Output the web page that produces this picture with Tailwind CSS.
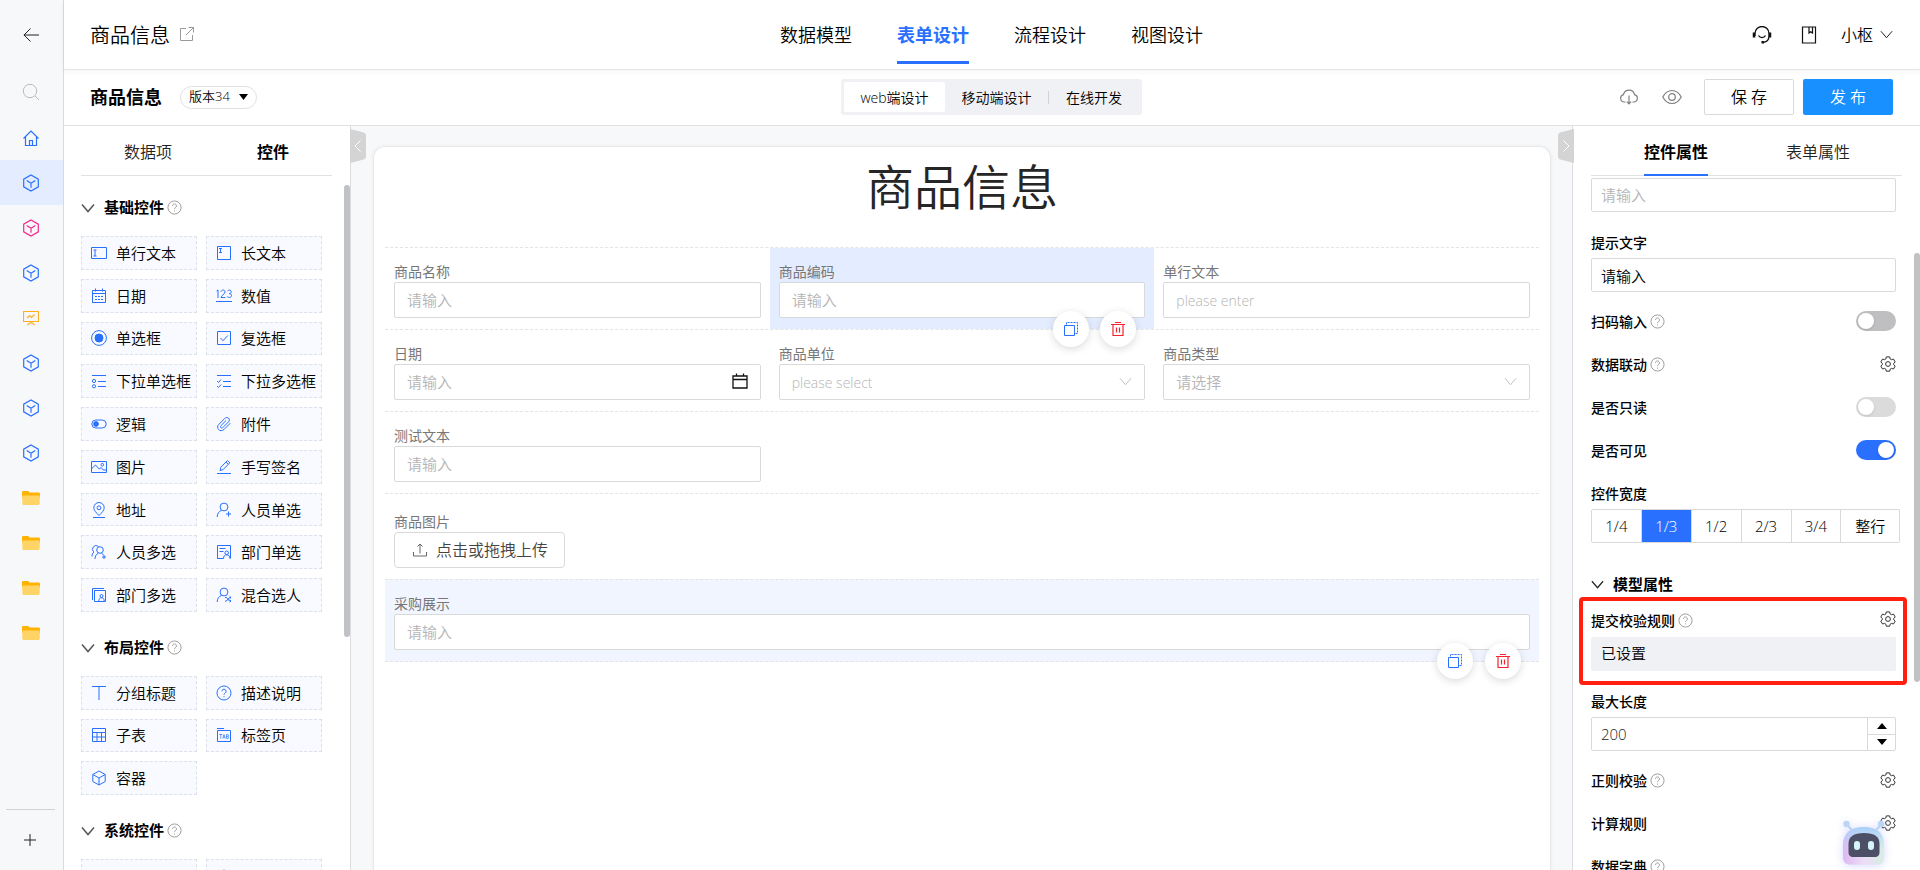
<!doctype html>
<html lang="zh-CN">
  <head>
    <meta charset="UTF-8">
    <meta name="viewport" content="width=device-width, initial-scale=1">
    <title>商品信息 - 表单设计</title>
    <script src="https://cdn.jsdelivr.net/npm/@tailwindcss/browser@4"></script>
  </head>
  <body class="h-screen overflow-hidden bg-white font-['Open_Sans','Noto_Sans_CJK_SC',sans-serif] font-[350] text-[15px] text-black">

    <!-- icon sprite -->
    <svg class="hidden" xmlns="http://www.w3.org/2000/svg">
      <symbol id="i-cube" viewBox="0 0 18 18"><path stroke-width="1.200" d="M9 1l7.300 4.200v7.600L9 17l-7.300-4.200V5.200zM4.700 6.600L9 9.200l4.300-2.600M9 9.200v4.600" /></symbol>
      <symbol id="i-folder" viewBox="0 0 18 16"><path fill="#ffb300" stroke="none" d="M0 2.200C0 1.500.5 1 1.200 1h4.600c.5 0 .8.200 1.100.6L7.600 2.500h9c.8 0 1.400.6 1.400 1.400V8H0z"/><path fill="#ffd466" stroke="none" d="M.3 5.500h17.400V13.500c0 .8-.6 1.500-1.400 1.500H1.700C.9 15 .3 14.300.3 13.500z"/></symbol>
      <symbol id="i-help" viewBox="0 0 16 16"><circle cx="8" cy="8" r="7"/><path d="M5.900 6.300a2.100 2.100 0 1 1 3.200 1.800c-.7.4-1.100.8-1.100 1.600M8 11.200v1"/></symbol>
      <symbol id="i-down" viewBox="0 0 14 14"><path d="M1 3.500l6 7 6-7"/></symbol>
      <symbol id="i-gear" viewBox="0 0 16 16"><circle cx="8" cy="8" r="2.400"/><path d="M6.300.9h3.400l.5 2.100 1.200.7 2.100-.6 1.700 2.900-1.500 1.500v1.200l1.500 1.400-1.700 2.900-2.100-.6-1.200.7-.5 2.100H6.300l-.5-2.100-1.200-.7-2.100.6L.8 10.100l1.500-1.400V7.500L.8 6l1.700-2.900 2.100.6L5.800 3z"/></symbol>
      <symbol id="i-copy" viewBox="0 0 16 16"><path d="M1.500 4.500h10v10h-10z"/><path stroke-dasharray="2 1" d="M3.500 3.500v-2h11v11h-2"/></symbol>
      <symbol id="i-trash" viewBox="0 0 16 16"><path stroke-width="1.200" d="M1 3.500h14M5 1.500h6M3 3.500V14.500h10V3.500M6.500 6.500v5M9.500 6.500v5"/></symbol>

      <symbol id="w-text" viewBox="0 0 16 16"><path d="M.5 2.500h15v11H.5zM2.500 5h3M2.500 11h3M4 5v6"/></symbol>
      <symbol id="w-area" viewBox="0 0 16 16"><path d="M1.500 1.500h13v13h-13zM3 3.500h3M3 7.500h3M4.500 3.500v4"/></symbol>
      <symbol id="w-date" viewBox="0 0 16 16"><path d="M1.500 2.500h13v12h-13zM1.500 5.500h13M4.500.5v3M11.500.5v3M4 8.500h2M7 8.500h2M10 8.500h2M4 11.500h2M7 11.500h2M10 11.500h2"/></symbol>
      <symbol id="w-num" viewBox="0 0 16 16"><path d="M0 13.500h16M.5 3L2 2v8M5 3.700C5.200 1.500 9 1.300 9 4c0 2-4 3.500-4 5.500h4.300M11.500 3c.8-1.400 3.700-1.200 3.700.8 0 1.300-1 1.800-2 1.800 1 0 2.300.5 2.300 1.900 0 2.400-3.500 2.500-4.200.8"/></symbol>
      <symbol id="w-radio" viewBox="0 0 16 16"><circle cx="8" cy="8" r="7.400"/><circle cx="8" cy="8" r="4" fill="currentColor"/></symbol>
      <symbol id="w-check" viewBox="0 0 16 16"><path d="M1.500 1.500h13v13h-13zM4.500 8l2.500 2.700 4.800-5.200"/></symbol>
      <symbol id="w-drop1" viewBox="0 0 16 16"><path d="M1 2.500h14M7 8.500h8M7 13.500h8"/><circle cx="3" cy="8" r="1.600"/><circle cx="3" cy="13.300" r="1.600"/></symbol>
      <symbol id="w-dropn" viewBox="0 0 16 16"><path d="M1 2.500h14M7 8.500h8M7 13.500h8M1 8l1.500 1.500L5 6.500M1 13l1.500 1.500L5 11.500"/></symbol>
      <symbol id="w-logic" viewBox="0 0 16 16"><rect x=".8" y="4" width="14.400" height="8" rx="4"/><circle cx="5" cy="8" r="2.400" fill="currentColor"/></symbol>
      <symbol id="w-clip" viewBox="0 0 16 16"><path d="M14.300 7.200l-6.200 6.200c-1.600 1.600-4.100 1.700-5.500.2-1.400-1.400-1.300-3.700.2-5.200l6-6c1.100-1.100 2.800-1.200 3.800-.2s1 2.700-.1 3.700l-5.700 5.700c-.6.6-1.500.6-2 .1s-.5-1.400.1-2l5.200-5.200"/></symbol>
      <symbol id="w-pic" viewBox="0 0 16 16"><path d="M.5 2.500h15v11H.5zM.8 9.500L4.500 6l3.700 4 2-1.500 2 2.500H15"/><circle cx="11.300" cy="5.700" r="1.300"/></symbol>
      <symbol id="w-pen" viewBox="0 0 16 16"><path d="M1 14.500h14M4 11.500l.8-3.200 6.700-6.800 2.300 2.300-6.700 6.800zM10 3l2.300 2.300"/></symbol>
      <symbol id="w-pin" viewBox="0 0 16 16"><path d="M2 15.500h12M8 13.500C5 10.500 2.800 8.300 2.800 5.700a5.200 5.200 0 0 1 10.400 0C13.200 8.300 11 10.500 8 13.500z"/><circle cx="8" cy="5.800" r="1.900"/></symbol>
      <symbol id="w-user" viewBox="0 0 16 16"><circle cx="8" cy="5" r="3.900"/><path d="M1.200 15c0-3.200 1.600-5.600 4.300-6.600M12.500 9.500v5M10 12h5"/></symbol>
      <symbol id="w-users" viewBox="0 0 16 16"><path d="M2.700 7.900A3.600 3.600 0 1 1 7.500 2.500M1 12.500c0-2 .6-3.500 2-4.500"/><circle cx="9" cy="6" r="3.300"/><path d="M4 15c0-2.700 1.200-4.700 3.200-5.700M10.500 9.300c1 .4 1.500.9 2 1.700M13 11v4M11 13h4"/></symbol>
      <symbol id="w-dept" viewBox="0 0 16 16"><path d="M14.500 6V1.500h-13v13h5M3.500 4.500h6M3.500 7.500h4M14.500 6v8.500"/><circle cx="10.700" cy="8.800" r="1.800"/><path d="M7.500 14.500c0-2.400 1.300-3.700 3.200-3.700s3.200 1.300 3.200 3.700M1.500 14.500h6"/></symbol>
      <symbol id="w-depts" viewBox="0 0 16 16"><path d="M1.500 13V1.500H13M3.500 3.500h11v11h-11z"/><circle cx="10.500" cy="9" r="1.500"/><path d="M7.800 14c0-2 1-3.200 2.700-3.200s2.700 1.200 2.700 3.200"/></symbol>
      <symbol id="w-mix" viewBox="0 0 16 16"><circle cx="8" cy="5" r="3.900"/><path d="M1.200 15c0-3.200 1.600-5.600 4.300-6.600M9 10.500h1.500l3 3.500H15M9 14h1.500l3-3.500H15M13.700 9.300L15 10.500l-1.300 1.200M13.700 12.800L15 14l-1.300 1.200"/></symbol>
      <symbol id="w-title" viewBox="0 0 16 16"><path d="M1 1.500h14M8 1.500V15"/></symbol>
      <symbol id="w-table" viewBox="0 0 16 16"><path d="M1.500 1.500h13v13h-13zM1.500 5.500h13M1.500 10h13M6 5.500v9M10.500 5.500v9"/></symbol>
      <symbol id="w-tab" viewBox="0 0 16 16"><path d="M1 1.500h7M1.500 3.500h13v11h-13z"/><path stroke-width=".7" d="M3.300 7.500h3M4.800 7.500v4M6.800 11.500l1.200-4 1.200 4M7.200 10.300h1.600M10.500 7.500v4h1.300c1.200 0 1.200-2 0-2 1 0 1-2 0-2zM10.500 9.500h1.300"/></symbol>
      <symbol id="w-box" viewBox="0 0 16 16"><path d="M8 1l6.200 3.500v7L8 15l-6.200-3.500v-7zM1.800 4.500L8 8l6.200-3.500M8 8v7"/></symbol>
    </svg>

    <div class="flex h-full w-full">

      <!-- app rail -->
      <nav class="flex w-16 shrink-0 flex-col items-center border-r border-[#d9dadd] bg-[#f7f8fa] fill-none pt-3 stroke-[#2970ff] [&>*]:pr-px">
        <button class="flex h-[46px] w-full items-center justify-center" aria-label="返回">
          <svg class="size-4 stroke-[#222]" viewBox="0 0 16 16"><path d="M16 8H.8M7.500 1.500L1 8l6.500 6.500"/></svg>
        </button>
        <button class="mt-[11px] flex h-[46px] w-full items-center justify-center" aria-label="搜索">
          <svg class="size-[18px] stroke-[#b9bbbf]" viewBox="0 0 18 18"><circle cx="8" cy="8" r="6.700"/><path d="M13 13l4 4"/></svg>
        </button>
        <a href="#" class="flex h-[45px] w-full items-center justify-center" aria-label="首页">
          <svg class="size-4" viewBox="0 0 16 16"><path stroke-width="1.200" d="M.5 8.500L8 1l7.500 7.500M2.500 7v8.500h11V7M6.500 15.500v-5h3v5"/></svg>
        </a>
        <a href="#" class="flex h-[45px] w-full items-center justify-center bg-[#e4edff]" aria-label="应用"><svg class="size-[18px]"><use href="#i-cube"/></svg></a>
        <a href="#" class="flex h-[45px] w-full items-center justify-center stroke-[#f5278f]" aria-label="应用"><svg class="size-[18px]"><use href="#i-cube"/></svg></a>
        <a href="#" class="flex h-[45px] w-full items-center justify-center" aria-label="应用"><svg class="size-[18px]"><use href="#i-cube"/></svg></a>
        <a href="#" class="flex h-[45px] w-full items-center justify-center stroke-[#ffb020]" aria-label="看板">
          <svg class="size-4" viewBox="0 0 16 16"><path stroke-width="1.200" d="M.5 1.500h15v10H.5zM4 8l2.500-2.500L8.500 7.500l3-3M8 11.500v2M4.500 15l2-2h3l2 2"/></svg>
        </a>
        <a href="#" class="flex h-[45px] w-full items-center justify-center" aria-label="应用"><svg class="size-[18px]"><use href="#i-cube"/></svg></a>
        <a href="#" class="flex h-[45px] w-full items-center justify-center" aria-label="应用"><svg class="size-[18px]"><use href="#i-cube"/></svg></a>
        <a href="#" class="flex h-[45px] w-full items-center justify-center" aria-label="应用"><svg class="size-[18px]"><use href="#i-cube"/></svg></a>
        <a href="#" class="flex h-[45px] w-full items-center justify-center" aria-label="文件夹"><svg class="h-4 w-[18px]"><use href="#i-folder"/></svg></a>
        <a href="#" class="flex h-[45px] w-full items-center justify-center" aria-label="文件夹"><svg class="h-4 w-[18px]"><use href="#i-folder"/></svg></a>
        <a href="#" class="flex h-[45px] w-full items-center justify-center" aria-label="文件夹"><svg class="h-4 w-[18px]"><use href="#i-folder"/></svg></a>
        <a href="#" class="flex h-[45px] w-full items-center justify-center" aria-label="文件夹"><svg class="h-4 w-[18px]"><use href="#i-folder"/></svg></a>
        <button class="mt-auto mr-[2px] flex h-[61px] w-[49px] items-center justify-center border-t border-[#d0d2d6]" aria-label="新增">
          <svg class="size-3 stroke-[#222]" viewBox="0 0 12 12"><path d="M6 0v12M0 6h12"/></svg>
        </button>
      </nav>

      <div class="flex min-w-0 flex-1 flex-col">

        <!-- top bar -->
        <header class="z-10 grid h-[70px] shrink-0 grid-cols-3 items-center border-b border-[#e3e4e6] bg-white pr-[27px] pl-[26px] shadow-[0_2px_6px_rgba(0,0,0,0.04)]">
          <div class="flex items-center gap-[10px] pt-[3px] text-xl">
            <span>商品信息</span>
            <svg class="-mt-1 size-[14px] fill-none stroke-[#999]" viewBox="0 0 14 14"><path d="M6 1.500H.5v12h12V8M8.500.5h5v5M13.500.5L6 8"/></svg>
          </div>
          <nav class="flex h-full justify-center gap-[45px] text-lg">
            <a href="#" class="mb-[5px] flex items-center border-b-3 border-transparent pt-[9px]">数据模型</a>
            <a href="#" class="mb-[5px] flex items-center border-b-3 border-[#2970ff] pt-[9px] font-bold text-[#2970ff]">表单设计</a>
            <a href="#" class="mb-[5px] flex items-center border-b-3 border-transparent pt-[9px]">流程设计</a>
            <a href="#" class="mb-[5px] flex items-center border-b-3 border-transparent pt-[9px]">视图设计</a>
          </nav>
          <div class="flex items-center justify-end fill-none stroke-[#111]">
            <button aria-label="客服">
              <svg class="h-[18px] w-5" viewBox="0 0 20 18"><path stroke-width="1.300" d="M3 10V7.500a7 7 0 0 1 14 0V10c0 3.500-2 5.800-5.500 6.300M6.500 9.500c1.500 2.700 5.500 2.700 7 0"/><path stroke-width="2.500" d="M2 6.500v5M18 6.500v5M9.500 16.300h2.500"/></svg>
            </button>
            <button class="ml-[29px]" aria-label="文档">
              <svg class="h-[18px] w-4" viewBox="0 0 16 18"><path stroke-width="1.200" d="M1.500 1h13v16h-13zM8 1v6l1.700-1.300L11.500 7V1"/></svg>
            </button>
            <button class="ml-6 flex items-center gap-[7px] text-base leading-5"><span>小枢</span><svg class="size-[13px]"><use href="#i-down"/></svg></button>
          </div>
        </header>

        <!-- form bar -->
        <div class="grid h-14 shrink-0 grid-cols-3 items-center border-b border-[#e0e1e3] bg-white pr-[27px] pb-px pl-[26px]">
          <div class="flex items-center gap-[18px]">
            <h1 class="text-lg font-bold">商品信息</h1>
            <button class="flex h-[23px] items-center gap-[9px] rounded-full border border-[#e0e0e0] px-2 text-[13px]">
              <span>版本34</span><svg class="h-[6px] w-[9px]" viewBox="0 0 9 6"><path d="M0 0h9L4.500 6z"/></svg>
            </button>
          </div>
          <div class="flex justify-center">
            <div class="flex h-9 items-center rounded-[3px] bg-[#f0f1f5] p-[3px] text-[14px]">
              <button class="h-[30px] w-[101px] rounded-[2px] bg-white whitespace-nowrap">web端设计</button>
              <button class="h-[30px] w-[103px] whitespace-nowrap">移动端设计</button>
              <span class="h-[13px] w-px bg-[#d0d2d6]"></span>
              <button class="h-[30px] w-[90px] whitespace-nowrap">在线开发</button>
            </div>
          </div>
          <div class="flex items-center justify-end fill-none stroke-[#808080]">
            <button aria-label="下载"><svg class="h-4 w-[18px]" viewBox="0 0 18 16"><path stroke-width="1.200" d="M5.500 13H4.300a3.700 3.700 0 0 1-.8-7.300 5.600 5.600 0 0 1 11 0 3.700 3.700 0 0 1-.8 7.300h-1.200M9 6.500V15M6.800 12.700L9 15l2.200-2.300"/></svg></button>
            <button class="ml-6" aria-label="预览"><svg class="h-4 w-5" viewBox="0 0 20 16"><path stroke-width="1.200" d="M.8 8C3 3.800 6.200 1.500 10 1.500S17 3.800 19.200 8C17 12.200 13.800 14.500 10 14.500S3 12.200.8 8z"/><circle cx="10" cy="8" r="3.300" stroke-width="1.200"/></svg></button>
            <button class="ml-[22px] h-9 w-[90px] rounded-[2px] border border-[#d9d9d9] text-base leading-none">保 存</button>
            <button class="ml-[9px] h-9 w-[90px] rounded-[2px] bg-[#1890ff] text-base leading-none text-white">发 布</button>
          </div>
        </div>

        <div class="flex min-h-0 flex-1">

          <!-- widget palette -->
          <aside class="relative w-[287px] shrink-0 border-r border-[#dcdde0] bg-white pr-[18px] pl-[17px]">
            <div class="grid h-[50px] grid-cols-2 gap-[7px] border-b border-[#e0e1e3] pt-[2px] pl-2 text-base">
              <button class="text-[#222]">数据项</button>
              <button class="font-bold">控件</button>
            </div>
            <div class="h-[694px] overflow-hidden pt-1 pr-[10px]">

              <h2 class="flex h-[55px] items-center text-[15px] font-bold">
                <svg class="mr-[9px] size-[14px] fill-none stroke-[#555] stroke-[1.5]"><use href="#i-down"/></svg>基础控件
                <svg class="ml-[3px] size-[15px] fill-none stroke-[#999]"><use href="#i-help"/></svg>
              </h2>
              <ul class="mt-px grid h-[376px] auto-rows-fr grid-cols-2 gap-[9px] [&_li]:flex [&_li]:items-center [&_li]:gap-[9px] [&_li]:border [&_li]:border-dashed [&_li]:border-[#dbe1ea] [&_li]:bg-[#f8faff] [&_li]:pl-[9px] [&_li]:leading-5 [&_li]:whitespace-nowrap [&_svg]:size-4 [&_svg]:shrink-0 [&_svg]:fill-none [&_svg]:stroke-[#2970ff] [&_svg]:text-[#2970ff]">
                <li><svg><use href="#w-text"/></svg>单行文本</li>
                <li><svg><use href="#w-area"/></svg>长文本</li>
                <li><svg><use href="#w-date"/></svg>日期</li>
                <li><svg><use href="#w-num"/></svg>数值</li>
                <li><svg><use href="#w-radio"/></svg>单选框</li>
                <li><svg><use href="#w-check"/></svg>复选框</li>
                <li><svg><use href="#w-drop1"/></svg>下拉单选框</li>
                <li><svg><use href="#w-dropn"/></svg>下拉多选框</li>
                <li><svg><use href="#w-logic"/></svg>逻辑</li>
                <li><svg><use href="#w-clip"/></svg>附件</li>
                <li><svg><use href="#w-pic"/></svg>图片</li>
                <li><svg><use href="#w-pen"/></svg>手写签名</li>
                <li><svg><use href="#w-pin"/></svg>地址</li>
                <li><svg><use href="#w-user"/></svg>人员单选</li>
                <li><svg><use href="#w-users"/></svg>人员多选</li>
                <li><svg><use href="#w-dept"/></svg>部门单选</li>
                <li><svg><use href="#w-depts"/></svg>部门多选</li>
                <li><svg><use href="#w-mix"/></svg>混合选人</li>
              </ul>

              <h2 class="mt-2 flex h-[55px] items-center text-[15px] font-bold">
                <svg class="mr-[9px] size-[14px] fill-none stroke-[#555] stroke-[1.5]"><use href="#i-down"/></svg>布局控件
                <svg class="ml-[3px] size-[15px] fill-none stroke-[#999]"><use href="#i-help"/></svg>
              </h2>
              <ul class="mt-px grid h-[119px] auto-rows-fr grid-cols-2 gap-[9px] [&_li]:flex [&_li]:items-center [&_li]:gap-[9px] [&_li]:border [&_li]:border-dashed [&_li]:border-[#dbe1ea] [&_li]:bg-[#f8faff] [&_li]:pl-[9px] [&_li]:leading-5 [&_li]:whitespace-nowrap [&_svg]:size-4 [&_svg]:shrink-0 [&_svg]:fill-none [&_svg]:stroke-[#2970ff]">
                <li><svg><use href="#w-title"/></svg>分组标题</li>
                <li><svg><use href="#i-help"/></svg>描述说明</li>
                <li><svg><use href="#w-table"/></svg>子表</li>
                <li><svg><use href="#w-tab"/></svg>标签页</li>
                <li><svg><use href="#w-box"/></svg>容器</li>
              </ul>

              <h2 class="mt-2 flex h-[55px] items-center text-[15px] font-bold">
                <svg class="mr-[9px] size-[14px] fill-none stroke-[#555] stroke-[1.5]"><use href="#i-down"/></svg>系统控件
                <svg class="ml-[3px] size-[15px] fill-none stroke-[#999]"><use href="#i-help"/></svg>
              </h2>
              <ul class="mt-px grid grid-cols-2 gap-[9px] [&_li]:h-[34px] [&_li]:border [&_li]:border-dashed [&_li]:border-[#dbe1ea] [&_li]:bg-[#f8faff] [&_li]:pt-[9px] [&_li]:pl-[9px] [&_svg]:size-4 [&_svg]:fill-none [&_svg]:stroke-[#2970ff]">
                <li><svg><use href="#w-text"/></svg></li>
                <li><svg><use href="#w-user"/></svg></li>
              </ul>
            </div>
            <div class="absolute top-[59px] right-0 h-[452px] w-[6px] rounded-full bg-[#c1c2c4]"></div>
            <button class="absolute top-[3px] -right-4 z-10" aria-label="收起左侧面板">
              <svg class="h-[34px] w-4" viewBox="0 0 16 34"><path fill="#d4d4d4" d="M0 0l13 3.300c2 .5 3 1.700 3 3.700v20c0 2-1 3.200-3 3.700L0 34z"/><path fill="none" stroke="#fff" d="M10.500 11.500L5 17l5.500 5.500"/></svg>
            </button>
          </aside>

          <!-- form canvas -->
          <main class="min-w-0 flex-1 bg-[#f7f8fa] pt-5 pr-[21px] pl-[22px]">
            <form class="h-full rounded-t-xl border border-b-0 border-[#e8e9eb] bg-white px-[11px] shadow-[0_0_4px_rgba(0,0,0,0.06)]">
              <h2 class="mb-5 text-center text-5xl leading-[80px] text-[#262626]">商品信息</h2>

              <div class="text-[14px] text-[#777] [&_label]:block [&_label]:leading-5 [&_label]:font-normal">
                <div class="grid grid-cols-3 border-t border-dashed border-[#e3e4e6]">
                  <div class="px-[9px] pt-[14px] pb-[11px]">
                    <label for="name">商品名称</label>
                    <input id="name" type="text" placeholder="请输入" class="block h-9 w-full rounded-[2px] border border-[#d9d9d9] bg-white px-3 text-[15px] placeholder:text-[#b5b5b5]">
                  </div>
                  <div class="relative bg-[#e4edff] px-[9px] pt-[14px] pb-[11px]">
                    <label for="code">商品编码</label>
                    <input id="code" type="text" placeholder="请输入" class="block h-9 w-full rounded-[2px] border border-[#d9d9d9] bg-white px-3 text-[15px] placeholder:text-[#b5b5b5]">
                    <div class="absolute right-[18px] -bottom-[18px] z-10 flex gap-[11px] fill-none">
                      <button type="button" aria-label="复制" class="flex size-9 items-center justify-center rounded-full bg-white stroke-[#2970ff] shadow-[0_2px_8px_rgba(0,0,0,0.15)]"><svg class="size-4"><use href="#i-copy"/></svg></button>
                      <button type="button" aria-label="删除" class="flex size-9 items-center justify-center rounded-full bg-white stroke-[#f5222d] shadow-[0_2px_8px_rgba(0,0,0,0.15)]"><svg class="size-4"><use href="#i-trash"/></svg></button>
                    </div>
                  </div>
                  <div class="px-[9px] pt-[14px] pb-[11px]">
                    <label for="line">单行文本</label>
                    <input id="line" type="text" placeholder="please enter" class="block h-9 w-full rounded-[2px] border border-[#d9d9d9] bg-white px-3 text-[14px] placeholder:text-[#b5b5b5]">
                  </div>
                </div>

                <div class="grid grid-cols-3 border-t border-dashed border-[#e3e4e6]">
                  <div class="px-[9px] pt-[14px] pb-[11px]">
                    <label for="day">日期</label>
                    <div class="relative">
                      <input id="day" type="text" placeholder="请输入" class="block h-9 w-full rounded-[2px] border border-[#d9d9d9] bg-white px-3 text-[15px] placeholder:text-[#b5b5b5]">
                      <svg class="absolute top-[9px] right-[13px] size-4 fill-none stroke-[#111]" viewBox="0 0 16 16"><path stroke-width="1.300" d="M1 3h14v12H1zM1 6.500h14M4.500.5V3M11.500.5V3"/></svg>
                    </div>
                  </div>
                  <div class="px-[9px] pt-[14px] pb-[11px]">
                    <label for="unit">商品单位</label>
                    <div class="relative">
                      <select id="unit" class="block h-9 w-full appearance-none rounded-[2px] border border-[#d9d9d9] bg-white px-3 text-[14px] text-[#b5b5b5]"><option>please select</option></select>
                      <svg class="pointer-events-none absolute top-[11px] right-[13px] size-[13px] fill-none stroke-[#bfbfbf]"><use href="#i-down"/></svg>
                    </div>
                  </div>
                  <div class="px-[9px] pt-[14px] pb-[11px]">
                    <label for="kind">商品类型</label>
                    <div class="relative">
                      <select id="kind" class="block h-9 w-full appearance-none rounded-[2px] border border-[#d9d9d9] bg-white px-3 text-[15px] text-[#b5b5b5]"><option>请选择</option></select>
                      <svg class="pointer-events-none absolute top-[11px] right-[13px] size-[13px] fill-none stroke-[#bfbfbf]"><use href="#i-down"/></svg>
                    </div>
                  </div>
                </div>

                <div class="grid grid-cols-3 border-t border-dashed border-[#e3e4e6]">
                  <div class="px-[9px] pt-[14px] pb-[11px]">
                    <label for="test">测试文本</label>
                    <input id="test" type="text" placeholder="请输入" class="block h-9 w-full rounded-[2px] border border-[#d9d9d9] bg-white px-3 text-[15px] placeholder:text-[#b5b5b5]">
                  </div>
                </div>

                <div class="border-t border-dashed border-[#e3e4e6] px-[9px] pt-[18px] pb-[11px]">
                  <label for="upload">商品图片</label>
                  <button id="upload" type="button" class="flex h-9 items-center gap-[9px] rounded-[4px] border border-[#d9d9d9] pr-4 pl-[18px] text-base leading-5 text-[#444]">
                    <svg class="size-[14px] fill-none stroke-[#666]" viewBox="0 0 14 14"><path d="M.5 9v4h13V9M7 10.500V1M4.500 3.500L7 1l2.500 2.500"/></svg>点击或拖拽上传
                  </button>
                </div>

                <div class="relative border-y border-dashed border-[#e3e4e6] bg-[#f1f5ff] px-[9px] pt-[14px] pb-[11px]">
                  <label for="purchase">采购展示</label>
                  <input id="purchase" type="text" placeholder="请输入" class="block h-9 w-full rounded-[2px] border border-[#d9d9d9] bg-white px-3 text-[15px] placeholder:text-[#b5b5b5]">
                  <div class="absolute right-[18px] -bottom-[18px] z-10 flex gap-3 fill-none">
                    <button type="button" aria-label="复制" class="flex size-9 items-center justify-center rounded-full bg-white stroke-[#2970ff] shadow-[0_2px_8px_rgba(0,0,0,0.15)]"><svg class="size-4"><use href="#i-copy"/></svg></button>
                    <button type="button" aria-label="删除" class="flex size-9 items-center justify-center rounded-full bg-white stroke-[#f5222d] shadow-[0_2px_8px_rgba(0,0,0,0.15)]"><svg class="size-4"><use href="#i-trash"/></svg></button>
                  </div>
                </div>
              </div>
            </form>
          </main>

          <!-- properties -->
          <aside class="relative w-[348px] shrink-0 border-l border-[#dcdde0] bg-white pl-[18px]">
            <button class="absolute top-[3px] -left-[15px] z-10" aria-label="收起右侧面板">
              <svg class="h-[34px] w-4" viewBox="0 0 16 34"><path fill="#d4d4d4" d="M16 0L3 3.300C1 3.800 0 5 0 7v20c0 2 1 3.200 3 3.700L16 34z"/><path fill="none" stroke="#fff" d="M5.500 11.500L11 17l-5.500 5.500"/></svg>
            </button>
            <div class="mr-[18px] flex h-[50px] gap-[78px] border-b border-[#e0e1e3] pl-[53px] text-base">
              <button class="-mb-px border-b-2 border-[#2970ff] pt-[3px] font-bold">控件属性</button>
              <button class="-mb-px border-b-2 border-transparent pt-[3px] text-[#222]">表单属性</button>
            </div>

            <div class="h-[694px] overflow-hidden pt-[2px] pr-6">
              <input type="text" placeholder="请输入" aria-label="标题" class="block h-[34px] w-full rounded-[2px] border border-[#d9d9d9] px-[9px] placeholder:text-[#b5b5b5]">

              <label for="tip" class="mt-[21px] mb-[5px] block text-[14px] leading-5 font-medium">提示文字</label>
              <input id="tip" type="text" value="请输入" class="block h-[34px] w-full rounded-[2px] border border-[#d9d9d9] px-[9px]">

              <div class="mt-2 text-[14px] font-medium">
                <div class="flex h-[43px] items-center">
                  <label for="scan">扫码输入</label>
                  <svg class="ml-[3px] size-[15px] fill-none stroke-[#999]"><use href="#i-help"/></svg>
                  <input id="scan" type="checkbox" class="mb-[2px] ml-auto h-5 w-10 appearance-none rounded-full bg-[#bfbfc1] p-[2px] before:block before:size-4 before:rounded-full before:bg-white before:shadow checked:bg-[#2970ff] checked:before:ml-5">
                </div>
                <div class="flex h-[43px] items-center">
                  <span>数据联动</span>
                  <svg class="ml-[3px] size-[15px] fill-none stroke-[#999]"><use href="#i-help"/></svg>
                  <button class="mb-[2px] ml-auto" aria-label="设置数据联动"><svg class="size-4 fill-none stroke-[#333]"><use href="#i-gear"/></svg></button>
                </div>
                <div class="flex h-[43px] items-center">
                  <label for="readonly">是否只读</label>
                  <input id="readonly" type="checkbox" class="mb-[2px] ml-auto h-5 w-10 appearance-none rounded-full bg-[#dbdbdc] p-[2px] before:block before:size-4 before:rounded-full before:bg-white before:shadow checked:bg-[#2970ff] checked:before:ml-5">
                </div>
                <div class="flex h-[43px] items-center">
                  <label for="visible">是否可见</label>
                  <input id="visible" type="checkbox" checked class="mb-[2px] ml-auto h-5 w-10 appearance-none rounded-full bg-[#bfbfc1] p-[2px] before:block before:size-4 before:rounded-full before:bg-white before:shadow checked:bg-[#2970ff] checked:before:ml-5">
                </div>
              </div>

              <p class="mt-3 mb-[5px] text-[14px] leading-5 font-medium">控件宽度</p>
              <div class="-mr-1 flex h-[34px] [&_input]:sr-only [&_label]:relative [&_label]:flex [&_label]:flex-[50] [&_label]:items-center [&_label]:justify-center [&_label]:border-y [&_label]:border-r [&_label]:border-[#d9d9d9]">
                <label class="rounded-l-[2px] border-l"><input type="radio" name="width">1/4</label>
                <label class="has-checked:bg-[#2970ff] has-checked:text-white"><input type="radio" name="width" checked>1/3</label>
                <label><input type="radio" name="width">1/2</label>
                <label><input type="radio" name="width">2/3</label>
                <label><input type="radio" name="width">3/4</label>
                <label class="grow-[59]! rounded-r-[2px]"><input type="radio" name="width">整行</label>
              </div>

              <h2 class="mt-[31px] flex items-center text-[15px] leading-5 font-bold">
                <svg class="mr-[9px] size-[13px] fill-none stroke-[#222] stroke-[1.3]"><use href="#i-down"/></svg>模型属性
              </h2>

              <div class="mt-4 flex h-5 items-center text-[14px] font-medium">
                <span>提交校验规则</span>
                <svg class="ml-[3px] size-[15px] fill-none stroke-[#999]"><use href="#i-help"/></svg>
                <button class="mb-[2px] ml-auto" aria-label="设置提交校验规则"><svg class="size-4 fill-none stroke-[#333]"><use href="#i-gear"/></svg></button>
              </div>
              <div class="mt-[7px] flex h-[34px] items-center rounded-[2px] bg-[#f0f1f5] px-[10px] pb-[2px]">已设置</div>

              <label for="max" class="mt-[21px] mb-[5px] block text-[14px] leading-5 font-medium">最大长度</label>
              <div class="flex h-[34px] rounded-[2px] border border-[#d9d9d9]">
                <input id="max" type="text" value="200" class="min-w-0 flex-1 px-[9px] text-[#222]">
                <div class="flex w-7 flex-col border-l border-[#d9d9d9]">
                  <button class="flex flex-1 items-center justify-center border-b border-[#d9d9d9]" aria-label="增加"><svg class="h-[6px] w-[10px]" viewBox="0 0 10 6"><path d="M0 6h10L5 0z"/></svg></button>
                  <button class="flex flex-1 items-center justify-center" aria-label="减少"><svg class="h-[6px] w-[10px]" viewBox="0 0 10 6"><path d="M0 0h10L5 6z"/></svg></button>
                </div>
              </div>

              <div class="mt-2 text-[14px] font-medium">
                <div class="flex h-[43px] items-center">
                  <span>正则校验</span>
                  <svg class="ml-[3px] size-[15px] fill-none stroke-[#999]"><use href="#i-help"/></svg>
                  <button class="mb-[2px] ml-auto" aria-label="设置正则校验"><svg class="size-4 fill-none stroke-[#333]"><use href="#i-gear"/></svg></button>
                </div>
                <div class="flex h-[43px] items-center">
                  <span>计算规则</span>
                  <button class="mb-[2px] ml-auto" aria-label="设置计算规则"><svg class="size-4 fill-none stroke-[#333]"><use href="#i-gear"/></svg></button>
                </div>
                <div class="flex h-[43px] items-center">
                  <span>数据字典</span>
                  <svg class="ml-[3px] size-[15px] fill-none stroke-[#999]"><use href="#i-help"/></svg>
                </div>
              </div>
            </div>

            <!-- highlight around the submit rule -->
            <div class="pointer-events-none absolute top-[471px] right-[13px] left-[6px] h-[88px] rounded-[4px] border-4 border-[#ff2010]"></div>
            <div class="absolute top-[127px] right-0 h-[429px] w-[6px] rounded-full bg-[#c1c2c4]"></div>

            <!-- assistant -->
            <button class="absolute top-[694px] right-[31px]" aria-label="智能助手">
              <svg class="h-[50px] w-[48px] drop-shadow-[0_1px_4px_rgba(150,160,255,0.4)]" viewBox="0 0 48 50">
                <defs>
                  <linearGradient id="shell" x1="0" y1="0" x2="1" y2="0"><stop offset="0" stop-color="#dcb8f2"/><stop offset=".5" stop-color="#eedcf6"/><stop offset="1" stop-color="#d5efe2"/></linearGradient>
                  <linearGradient id="sky" x1="0" y1="0" x2="0" y2="1"><stop offset="0" stop-color="#a5d0f8"/><stop offset=".6" stop-color="#b9d4fa" stop-opacity="0"/></linearGradient>
                </defs>
                <path d="M6 5l5 5M40 5l-5 5" stroke="#b4d2f4" stroke-width="2"/>
                <circle cx="5.500" cy="4" r="3.200" fill="#bcd5f4"/><circle cx="40" cy="4" r="3.200" fill="#bcd5f4"/>
                <path d="M2 25C2 13 10 7 23 7s20 6 20 18v12c0 5-2.500 7.500-7 7.500H9C4.500 44.500 2 42 2 37z" fill="url(#shell)"/>
                <path d="M2 25C2 13 10 7 23 7s20 6 20 18v12c0 5-2.500 7.500-7 7.500H9C4.500 44.500 2 42 2 37z" fill="url(#sky)"/>
                <path d="M7.500 24c0-7.500 5-11 15.500-11s15.500 3.500 15.500 11v8c0 3.500-1.500 5-5 5h-21c-3.500 0-5-1.500-5-5z" fill="#4c4f66"/>
                <rect x="13" y="21" width="6" height="9" rx="3" fill="#d8f4fb"/><rect x="27" y="21" width="6" height="9" rx="3" fill="#d8f4fb"/>
              </svg>
            </button>
          </aside>

        </div>
      </div>
    </div>

  </body>
</html>
